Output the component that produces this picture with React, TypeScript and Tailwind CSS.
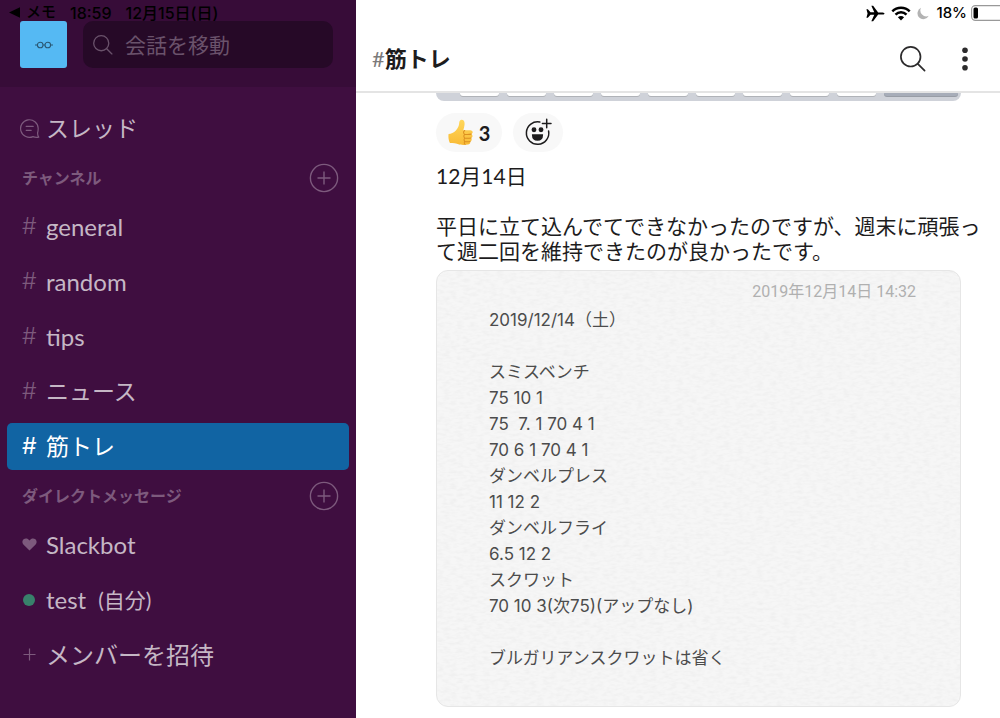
import type { ReactNode } from "react"

type Channel = { name: string; active?: boolean; latin?: boolean }

const channels: Channel[] = [
  { name: "general", latin: true },
  { name: "random", latin: true },
  { name: "tips", latin: true },
  { name: "ニュース" },
  { name: "筋トレ", active: true },
]

const memoLines = [
  "2019/12/14（土）",
  "",
  "スミスベンチ",
  "75 10 1",
  "75  7. 1 70 4 1",
  "70 6 1 70 4 1",
  "ダンベルプレス",
  "11 12 2",
  "ダンベルフライ",
  "6.5 12 2",
  "スクワット",
  "70 10 3(次75)(アップなし)",
  "",
  "ブルガリアンスクワットは省く",
]

function SearchIcon({ className }: { className: string }) {
  return (
    <svg viewBox="0 0 26 26" className={className} fill="none" stroke="currentColor" aria-hidden>
      <circle cx="10.7" cy="10.7" r="9.8" />
      <path d="M17.8 17.8 24.6 24.6" strokeLinecap="round" />
    </svg>
  )
}

function ThreadsIcon() {
  return (
    <svg viewBox="0 0 20 20" className="h-5 w-5" fill="none" stroke="currentColor" strokeWidth="1.2" strokeLinecap="round" strokeLinejoin="round" aria-hidden>
      <path d="M18.2 9.2A8.8 8.8 0 1 0 13 17.6c1.6.7 3.8.8 5.8.5-.9-1.1-1.3-2.700-1.200-4.400.4-1.300.6-2.900.6-4.500Z" />
      <path d="M6.2 7.400h7M6.200 11.300h5" />
    </svg>
  )
}

function HeartIcon() {
  return (
    <svg viewBox="0 0 16 14" className="h-[13px] w-[15px]" fill="currentColor" aria-hidden>
      <path d="M8 13.500 1.400 7C-.2 5.200.1 2.600 1.700 1.300 3.500-.1 6.400.2 8 2.700 9.600.2 12.500-.1 14.300 1.300c1.600 1.300 1.900 3.900.3 5.700Z" />
    </svg>
  )
}

function AddReactionIcon() {
  return (
    <svg viewBox="0 1 28 28" className="h-7 w-7 overflow-visible" fill="none" stroke="currentColor" strokeWidth="1.5" strokeLinecap="round" aria-hidden>
      <path d="M15.800 4.100A11.200 11.200 0 1 0 24.600 13" />
      <path d="M22.700 1.200v8.600M18.400 5.500H27" />
      <circle cx="10" cy="11.800" r="1.700" fill="currentColor" />
      <circle cx="17" cy="11.800" r="1.700" fill="currentColor" />
      <path d="M8.700 17h9.600c0 3-2 5-4.800 5s-4.800-2-4.800-5Z" fill="currentColor" />
    </svg>
  )
}

function ThumbsUp() {
  return (
    <svg viewBox="0 0 26 28" className="h-[27px] w-[25px]" aria-hidden>
      <defs>
        <linearGradient id="thumb" x1="0" y1="0" x2="0" y2="1">
          <stop offset="0" stopColor="#ffd75b" />
          <stop offset="1" stopColor="#f9bb36" />
        </linearGradient>
      </defs>
      <path d="M.6 15.500c2.600-.3 5.400-1.200 7.600-3.700 2-2.300 3.300-4.100 3.400-7.300C11.700 2 12.700.8 14.200.8c2.300 0 3.300 2.200 3 5.100-.2 2-.7 3.800-1.300 5.700h7.300c3 .2 3.200 3.400.9 4.100 2 .8 1.700 3.500-.2 4 1.300 1 .9 3.200-.9 3.600.7 1.400-.3 3.100-2.200 3.300-4.300.5-8.300.5-11.500-.9C7 24.700 4 24.800 2 25 .6 22 .1 18.600.6 15.500Z" fill="url(#thumb)" />
      <path d="M24.100 15.700c-2 .5-4.600.6-7 .2M23.900 19.700c-2 .4-4.500.4-6.700 0M23 23.300c-1.800.4-3.800.4-5.600 0M17.400 12c-1.700 1-1.600 3.100 0 4-1.300 1-1.200 2.900.1 3.800-1.100.9-1 2.600 0 3.500-.9.8-.7 2.300.3 3.100" fill="none" stroke="#dc9020" strokeWidth="1.100" strokeLinecap="round" />
    </svg>
  )
}

function StatusIcons() {
  return (
    <div className="flex h-[26px] shrink-0 items-center justify-end overflow-hidden font-[Inter,sans-serif] text-[15px] font-medium text-black">
      <svg viewBox="0 0 20 18" className="mr-[6px] h-[17px] w-[19px]" fill="currentColor" aria-hidden>
        <path d="M.4 4.400h1.500l2.800 3.200 4 .2L5.600.8h1.900l5.300 7.100h4.800c2.600.3 2.600 1.900 0 2.200h-4.800l-5.300 7.100H5.600l3.100-7-4 .2-2.800 3.200H.4L1.600 9Z" />
      </svg>
      <svg viewBox="0 0 20 15" className="mr-[6px] h-[15px] w-5" fill="none" stroke="currentColor" strokeWidth="2.500" aria-hidden>
        <path d="M1.300 5.300a12.400 12.400 0 0 1 17.400 0M4.500 8.600a7.900 7.900 0 0 1 11 0" />
        <path d="M10 14.600 6.900 11.300a4.600 4.600 0 0 1 6.200 0Z" fill="currentColor" stroke="none" />
      </svg>
      <svg viewBox="0 0 13 13" className="mr-[7px] h-[13px] w-3" fill="#b3b3b3" aria-hidden>
        <path d="M4.300.4A6.400 6.400 0 1 0 12.700 9 6.400 6.400 0 0 1 4.300.4Z" />
      </svg>
      <span>18%</span>
      <svg viewBox="0 0 29 16" className="ml-1 h-4 w-[29px] shrink-0" aria-hidden>
        <rect x=".6" y=".6" width="34" height="14.800" rx="3.800" fill="none" stroke="#999" strokeWidth="1.100" />
        <rect x="2.500" y="2.500" width="4.500" height="11" rx="1.500" fill="#000" />
      </svg>
    </div>
  )
}

function SidebarRow({ icon, active, children }: { icon: ReactNode; active?: boolean; children: ReactNode }) {
  return (
    <li className="px-[7px] py-1">
      <a
        href="#"
        aria-current={active ? "page" : undefined}
        className={
          active
            ? "flex h-[47px] items-center rounded-[5px] bg-[#1164a3] text-white"
            : "flex h-[47px] items-center text-[#c5b7c5]"
        }
      >
        <span className={active ? "flex w-[39px] pl-[15px]" : "flex w-[39px] pl-[15px] text-[#7d5a7d]"}>{icon}</span>
        {children}
      </a>
    </li>
  )
}

function SectionHeading({ title, action }: { title: string; action: string }) {
  return (
    <div className="flex h-[43px] items-center justify-between pr-[17px] pl-[22px] text-[#7d5a7d]">
      <h2 className="text-base leading-5 font-bold">{title}</h2>
      <button type="button" aria-label={action}>
        <svg viewBox="0 0 30 30" className="h-[30px] w-[30px]" fill="none" stroke="currentColor" strokeWidth="1.400" aria-hidden>
          <circle cx="15" cy="15" r="13.600" />
          <path d="M15 8.500v13M8.500 15h13" />
        </svg>
      </button>
    </div>
  )
}

function Sidebar() {
  return (
    <aside className="flex w-[356px] shrink-0 flex-col bg-[#3f0e40]">
      <div className="h-[87px] shrink-0 bg-[#370c38]">
        <div className="flex h-[21px] items-center gap-[14px] pt-1 pl-[9px] font-[Inter,'Noto_Sans_CJK_JP',sans-serif] text-base font-medium text-black">
          <span className="flex items-center gap-[6px] text-[15px]">
            <svg viewBox="0 0 11 11" className="h-[11px] w-[11px]" aria-hidden>
              <path d="M0 5.500 11 .3v10.400Z" />
            </svg>
            メモ
          </span>
          <span>18:59</span>
          <span>12月15日(日)</span>
        </div>
        <div className="flex gap-4 pr-[23px] pl-5">
          <button type="button" aria-label="ワークスペース" className="flex h-[47px] w-[47px] items-center justify-center rounded-[3px] bg-[#55b9f3]">
            <svg viewBox="0 0 18 8" className="h-2 w-[18px]" fill="none" stroke="#2a5874" strokeWidth="1.100" aria-hidden>
              <circle cx="5.200" cy="4" r="2.800" />
              <circle cx="12.800" cy="4" r="2.800" />
              <path d="M0 4h2.400M8 4h2M15.600 4H18" />
            </svg>
          </button>
          <label className="flex h-[47px] min-w-0 flex-1 items-center gap-3 rounded-[10px] bg-[#260927] px-[10px] text-[#6a526b]">
            <SearchIcon className="h-5 w-5 shrink-0 stroke-[1.700]" />
            <input
              type="search"
              aria-label="会話を移動"
              placeholder="会話を移動"
              className="w-full min-w-0 bg-transparent text-[21px] outline-none placeholder:text-[#6a526b]"
            />
          </label>
        </div>
      </div>

      <nav className="pt-[14px] text-[23px]">
        <ul>
          <SidebarRow icon={<span className="-ml-0.5"><ThreadsIcon /></span>}>スレッド</SidebarRow>
        </ul>
        <SectionHeading title="チャンネル" action="チャンネルを追加" />
        <ul>
          {channels.map((c) => (
            <SidebarRow
              key={c.name}
              icon={<span className={c.active ? "font-[Inter,sans-serif]" : "font-[Inter,sans-serif] font-light"}>#</span>}
              active={c.active}
            >
              <span className={c.latin ? "text-2xl" : undefined}>{c.name}</span>
            </SidebarRow>
          ))}
        </ul>
        <SectionHeading title="ダイレクトメッセージ" action="メッセージを作成" />
        <ul>
          <SidebarRow icon={<HeartIcon />}>
            <span className="text-2xl">Slackbot</span>
          </SidebarRow>
          <SidebarRow icon={<span className="ml-px h-3 w-3 rounded-full bg-[#38816b]" />}>
            <span className="text-2xl">test</span>
            <span className="ml-3 text-[21px]">(自分)</span>
          </SidebarRow>
          <SidebarRow
            icon={
              <svg viewBox="0 0 13 13" className="ml-px h-[13px] w-[13px]" stroke="currentColor" strokeWidth="1.200" aria-hidden>
                <path d="M6.500.5v12M.5 6.500h12" />
              </svg>
            }
          >
            <span className="text-2xl">メンバーを招待</span>
          </SidebarRow>
        </ul>
      </nav>
    </aside>
  )
}

function ChannelHeader() {
  return (
    <header className="flex h-[93px] shrink-0 flex-col border-b-2 border-[#e4e4e4]">
      <StatusIcons />
      <div className="flex flex-1 items-center pr-8 pl-4">
        <h1 className="flex-1 text-[22px] font-bold text-[#1d1c1d]">
          <span className="font-normal text-[#7b7a7b]">#</span>筋トレ
        </h1>
        <button type="button" aria-label="検索" className="mr-9 text-[#2c2b2c]">
          <SearchIcon className="h-[26px] w-[26px] stroke-[1.700]" />
        </button>
        <button type="button" aria-label="その他" className="text-[#2c2b2c]">
          <svg viewBox="0 0 6 24" className="h-6 w-[6px]" fill="currentColor" aria-hidden>
            <circle cx="3" cy="3.200" r="2.800" />
            <circle cx="3" cy="12" r="2.800" />
            <circle cx="3" cy="20.800" r="2.800" />
          </svg>
        </button>
      </div>
    </header>
  )
}

function Reactions() {
  return (
    <div className="flex gap-[11px]">
      <button type="button" className="flex h-[39px] w-[66px] items-center justify-center gap-[6px] rounded-full bg-[#f8f8f8] text-xl font-bold text-[#1d1c1d]">
        <ThumbsUp />3
      </button>
      <button type="button" aria-label="リアクションを追加" className="flex h-[39px] w-[50px] items-center justify-center rounded-full bg-[#f8f8f8] text-[#1d1c1d]">
        <AddReactionIcon />
      </button>
    </div>
  )
}

// bottom edge of the previous attachment, cut off by the header
function KeyboardEdge() {
  return (
    <div className="flex h-2 gap-2 rounded-b-[9px] bg-[#cfd2d9] pr-[3px] pl-6">
      {Array.from({ length: 9 }, (_, i) => (
        <span key={i} className="h-[3px] flex-1 rounded-b-[3px] bg-white shadow-[0_1px_0_#b0b3b8]" />
      ))}
      <span className="h-[3px] w-[74px] rounded-b-[3px] bg-[#a7adb9] shadow-[0_1px_0_#989da6]" />
    </div>
  )
}

function MemoCard() {
  return (
    <div className="relative overflow-hidden rounded-xl border border-[#e6e6e6] bg-[#f6f6f6] pb-[35px] font-[Inter,'Noto_Sans_CJK_JP',sans-serif]">
      {/* paper grain */}
      <svg className="absolute inset-0 h-full w-full" aria-hidden>
        <filter id="paper" x="0" y="0" width="100%" height="100%">
          <feTurbulence type="fractalNoise" baseFrequency="0.15 0.35" numOctaves="2" seed="4" />
          <feColorMatrix values="0 0 0 0 0  0 0 0 0 0  0 0 0 0 0  .14 0 0 0 -.05" />
        </filter>
        <rect width="100%" height="100%" filter="url(#paper)" opacity="0.4" />
      </svg>
      <div className="relative">
        <p className="pt-2 pr-11 text-right font-[Roboto,'Noto_Sans_CJK_JP',sans-serif] text-base leading-[26px] text-[#b0b0b0]">
          2019年12月14日 14:32
        </p>
        <div className="mt-[2px] pl-[52px] text-[17px] text-[#4c4c4c]">
          {memoLines.map((line, i) => (
            <p key={i} className="h-[26px] leading-[26px] whitespace-pre">{line}</p>
          ))}
        </div>
      </div>
    </div>
  )
}

export default function App() {
  return (
    <div lang="ja" className="flex h-screen overflow-hidden bg-white font-[Lato,'Noto_Sans_CJK_JP',sans-serif]">
      <Sidebar />
      <main className="flex min-w-0 flex-1 flex-col">
        <ChannelHeader />
        <section className="min-h-0 flex-1 overflow-hidden pr-[14px] pl-20">
          <div className="mr-[25px]">
            <KeyboardEdge />
          </div>
          <div className="mt-3">
            <Reactions />
          </div>
          <div className="mt-[11px] text-[21px] leading-[25px] text-[#1d1c1d]">
            <p>12月14日</p>
            <p className="mt-[25px]">
              平日に立て込んでてできなかったのですが、週末に頑張って週二回を維持できたのが良かったです。
            </p>
          </div>
          <div className="mt-[7px] mr-[25px]">
            <MemoCard />
          </div>
          {/* pills of the next row, mostly below the fold */}
          <div className="mt-[11px] flex gap-[11px]">
            <span className="h-[39px] w-[66px] rounded-full bg-[#f8f8f8]" />
            <span className="h-[39px] w-[50px] rounded-full bg-[#f8f8f8]" />
          </div>
        </section>
      </main>
    </div>
  )
}
